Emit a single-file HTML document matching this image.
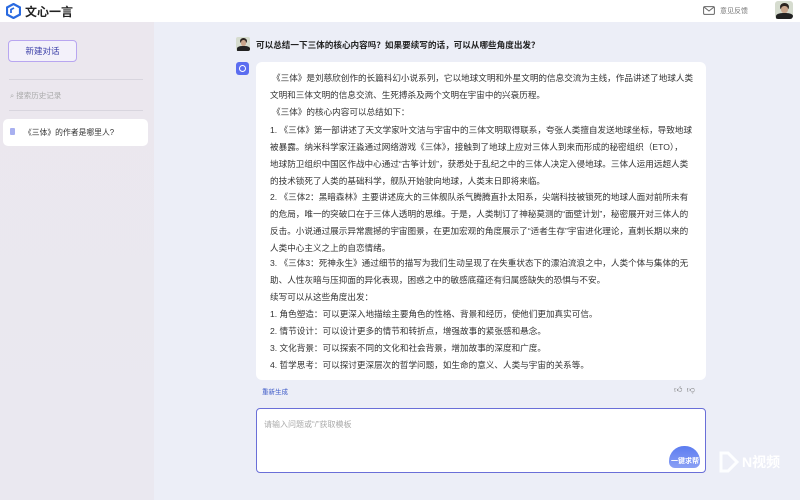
<!DOCTYPE html>
<html><head><meta charset="utf-8"><style>
*{margin:0;padding:0;box-sizing:border-box}
body{width:800px;height:500px;overflow:hidden;font-family:"Liberation Sans","Noto Sans CJK SC",sans-serif;background:#eceef7;position:relative;color:#222}
.hdr{position:absolute;left:0;top:0;width:800px;height:22px;background:#fff}
.side{position:absolute;left:0;top:22px;width:154px;height:478px;background:linear-gradient(180deg,#ebe7ee,#eae8f0)}
.abs{position:absolute}
.card{position:absolute;left:256px;top:62px;width:450px;height:318px;background:#fff;border-radius:6px}
.card p{position:absolute;left:16px;font-size:8.6px;white-space:nowrap;color:#333;line-height:10px}
.av{position:absolute;overflow:hidden;background:#d6dccf}
.av .h{position:absolute;border-radius:50%;background:#2b2420}
.av .f{position:absolute;border-radius:45%;background:#c9a58c}
.av .b{position:absolute;border-radius:40% 40% 0 0;background:#222}
</style></head><body>
<div class="hdr">
 <svg class="abs" style="left:6px;top:3px" width="15" height="16" viewBox="0 0 15 16"><path d="M7.5 1L14 4.5V11.5L7.5 15L1 11.5V4.5Z" fill="none" stroke="#2a6ae0" stroke-width="2.2"/><path d="M5 10V6.5L8 5" fill="none" stroke="#2a6ae0" stroke-width="1.8"/></svg>
 <div class="abs" style="left:25px;top:3px;font-size:12px;font-weight:bold;color:#222">文心一言</div>
 <svg class="abs" style="left:703px;top:6px" width="12" height="9" viewBox="0 0 12 9"><rect x="0.6" y="0.6" width="10.8" height="7.8" rx="1.2" fill="none" stroke="#666" stroke-width="1"/><path d="M1 1L6 5L11 1" fill="none" stroke="#666" stroke-width="1"/></svg>
 <div class="abs" style="left:720px;top:6px;font-size:7px;color:#777">意见反馈</div>
 <div class="av" style="left:775px;top:1px;width:18px;height:18px;border-radius:3px"><div class="h" style="left:5px;top:2px;width:9px;height:8px"></div><div class="f" style="left:6px;top:5px;width:7px;height:7px"></div><div class="b" style="left:1px;top:12px;width:17px;height:8px"></div></div>
</div>
<div class="side">
 <div class="abs" style="left:8px;top:18px;width:69px;height:22px;border:1px solid #b8a6f0;border-radius:4px;background:#f3f1fa;font-size:8.5px;color:#3b3fa8;text-align:center;line-height:20px">新建对话</div>
 <div class="abs" style="left:9px;top:57px;width:134px;height:1px;background:#d8d5de"></div>
 <div class="abs" style="left:10px;top:68px;font-size:7.5px;color:#aaa">⌕ 搜索历史记录</div>
 <div class="abs" style="left:9px;top:88px;width:134px;height:1px;background:#d8d5de"></div>
 <div class="abs" style="left:3px;top:97px;width:145px;height:27px;background:#fff;border-radius:5px"></div>
 <div class="abs" style="left:10px;top:106px;width:5px;height:7px;background:#a8b0f0;border-radius:1px"></div>
 <div class="abs" style="left:24px;top:105px;font-size:7.8px;color:#333">《三体》的作者是哪里人?</div>
</div>
<div class="av" style="left:236px;top:37px;width:14px;height:14px;border-radius:2px"><div class="h" style="left:4px;top:1px;width:7px;height:6px"></div><div class="f" style="left:5px;top:3px;width:5px;height:6px"></div><div class="b" style="left:1px;top:9px;width:13px;height:6px"></div></div>
<div class="abs" style="left:256px;top:39px;font-size:8.6px;font-weight:bold;color:#222">可以总结一下三体的核心内容吗？如果要续写的话，可以从哪些角度出发？</div>
<div class="abs" style="left:236px;top:62px;width:13px;height:13px;border-radius:3px;background:#5b6df0"></div>
<div class="abs" style="left:239px;top:65px;width:7px;height:7px;border-radius:50%;border:1.3px solid #fff"></div>
<div class="card">
<p style="top:11px">《三体》是刘慈欣创作的长篇科幻小说系列，它以地球文明和外星文明的信息交流为主线，作品讲述了地球人类</p>
<p style="top:28px;left:14px">文明和三体文明的信息交流、生死搏杀及两个文明在宇宙中的兴衰历程。</p>
<p style="top:45px">《三体》的核心内容可以总结如下：</p>
<p style="top:63px;left:14px">1. 《三体》第一部讲述了天文学家叶文洁与宇宙中的三体文明取得联系，夸张人类擅自发送地球坐标，导致地球</p>
<p style="top:80px;left:14px">被暴露。纳米科学家汪淼通过网络游戏《三体》，接触到了地球上应对三体人到来而形成的秘密组织（ETO），</p>
<p style="top:97px;left:14px">地球防卫组织中国区作战中心通过“古筝计划”，获悉处于乱纪之中的三体人决定入侵地球。三体人运用远超人类</p>
<p style="top:114px;left:14px">的技术锁死了人类的基础科学，舰队开始驶向地球，人类末日即将来临。</p>
<p style="top:130px;left:14px">2. 《三体2：黑暗森林》主要讲述庞大的三体舰队杀气腾腾直扑太阳系，尖端科技被锁死的地球人面对前所未有</p>
<p style="top:147px;left:14px">的危局，唯一的突破口在于三体人透明的思维。于是，人类制订了神秘莫测的“面壁计划”，秘密展开对三体人的</p>
<p style="top:164px;left:14px">反击。小说通过展示异常震撼的宇宙图景，在更加宏观的角度展示了“适者生存”宇宙进化理论，直刺长期以来的</p>
<p style="top:181px;left:14px">人类中心主义之上的自恋情绪。</p>
<p style="top:196px;left:14px">3. 《三体3：死神永生》通过细节的描写为我们生动呈现了在失重状态下的漂泊流浪之中，人类个体与集体的无</p>
<p style="top:213px;left:14px">助、人性灰暗与压抑面的异化表现，困惑之中的敏感底蕴还有归属感缺失的恐惧与不安。</p>
<p style="top:230px;left:14px">续写可以从这些角度出发：</p>
<p style="top:247px;left:14px">1. 角色塑造：可以更深入地描绘主要角色的性格、背景和经历，使他们更加真实可信。</p>
<p style="top:264px;left:14px">2. 情节设计：可以设计更多的情节和转折点，增强故事的紧张感和悬念。</p>
<p style="top:281px;left:14px">3. 文化背景：可以探索不同的文化和社会背景，增加故事的深度和广度。</p>
<p style="top:298px;left:14px">4. 哲学思考：可以探讨更深层次的哲学问题，如生命的意义、人类与宇宙的关系等。</p>
</div>
<div class="abs" style="left:262px;top:386px;font-size:6.5px;color:#3e5bc8">重新生成</div>
<div class="abs" style="left:674px;top:385px;font-size:8px;color:#777">👍︎ &nbsp;👎︎</div>
<div class="abs" style="left:256px;top:408px;width:450px;height:65px;background:#fff;border:1px solid #6a6fd8;border-radius:4px"></div>
<div class="abs" style="left:264px;top:419px;font-size:8px;color:#aaa">请输入问题或“/”获取模板</div>
<div class="abs" style="left:669px;top:446px;width:31px;height:22px;border-radius:15px 15px 6px 6px;background:linear-gradient(180deg,#5c7cf0,#8aa0f5)"></div>
<div class="abs" style="left:671px;top:456px;font-size:7px;color:#fff;font-weight:bold">一键求帮</div>
<svg class="abs" style="left:719px;top:451px" width="20" height="22" viewBox="0 0 20 22"><path d="M2 2H9L18 11L9 20H2Z" fill="none" stroke="#fff" stroke-width="3" opacity=".9"/></svg>
<div class="abs" style="left:742px;top:452px;font-size:14px;color:#fff;font-weight:bold">N视频</div>
</body></html>
